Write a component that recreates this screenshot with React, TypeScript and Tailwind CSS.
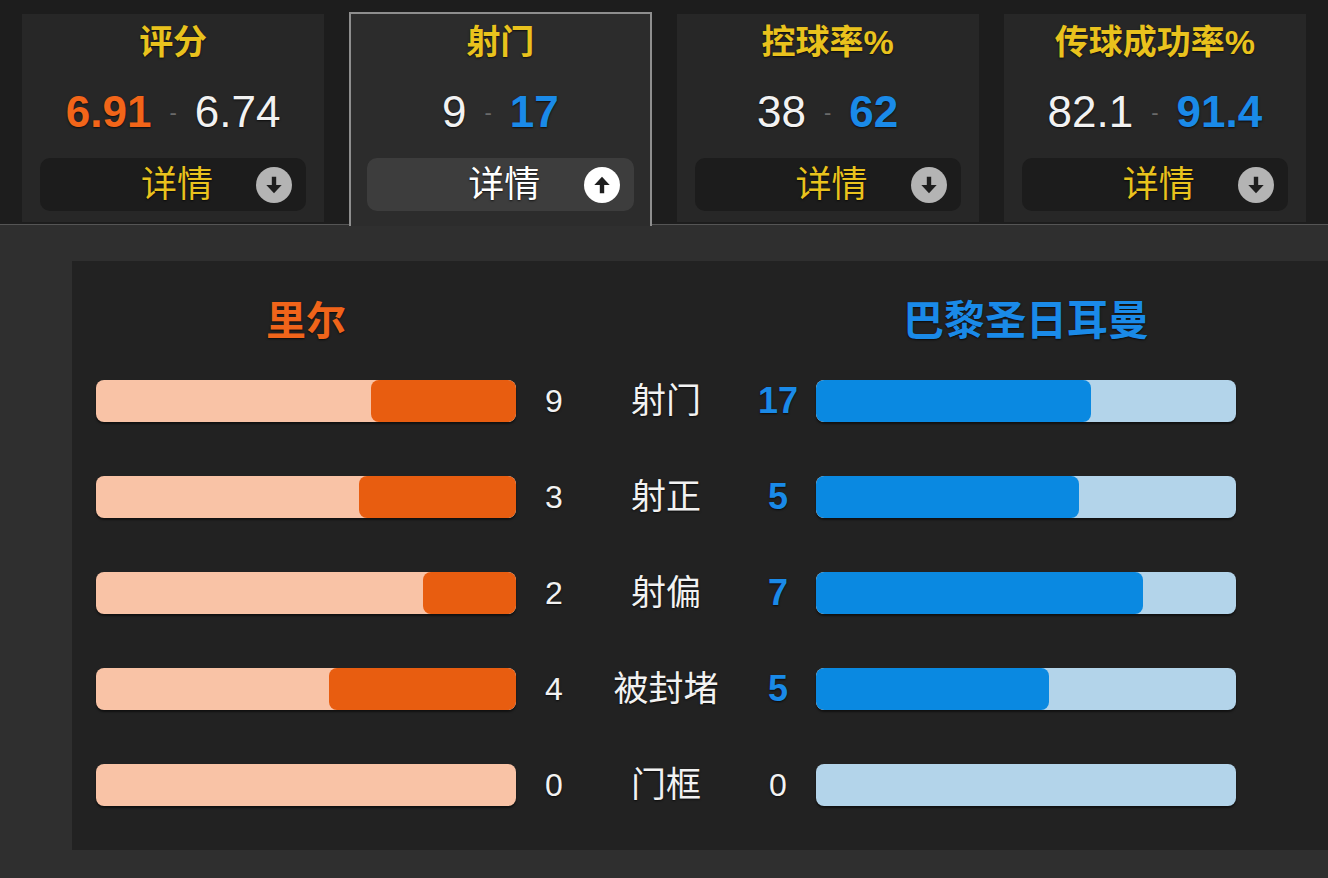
const font = "font-['Liberation_Sans','Noto_Sans_CJK_SC',sans-serif]";
const shadow = '[text-shadow:0_1px_2px_rgba(0,0,0,0.7)]';

const cards = [
  { title: '评分', home: '6.91', away: '6.74', lead: 'home' },
  { title: '射门', home: '9', away: '17', lead: 'away', active: true },
  { title: '控球率%', home: '38', away: '62', lead: 'away' },
  { title: '传球成功率%', home: '82.1', away: '91.4', lead: 'away' },
];

const rows = [
  { label: '射门', home: 9, away: 17 },
  { label: '射正', home: 3, away: 5 },
  { label: '射偏', home: 2, away: 7 },
  { label: '被封堵', home: 4, away: 5 },
  { label: '门框', home: 0, away: 0 },
];

function ArrowIcon({ up }: { up?: boolean }) {
  return (
    <span
      className={`flex h-[36px] w-[36px] items-center justify-center rounded-full ${
        up ? 'bg-white' : 'bg-[#b4b4b4]'
      }`}
    >
      <svg width="22" height="22" viewBox="0 0 20 20" className={up ? 'rotate-180' : ''}>
        <rect x="8" y="2.5" width="4" height="8.5" fill="#1e1e1e" />
        <path d="M3 10 L17 10 L10 17.5 Z" fill="#1e1e1e" />
      </svg>
    </span>
  );
}

function StatCard({ card }: { card: (typeof cards)[number] }) {
  const homeLead = card.lead === 'home';
  return (
    <div
      className={
        card.active
          ? 'relative z-10 mt-[12px] flex h-[214px] flex-1 flex-col items-center border-2 border-b-0 border-[#8e8e8e] bg-[#2c2c2c] px-[16px] pt-[8px]'
          : 'mt-[14px] flex h-[208px] flex-1 flex-col items-center bg-[#272727] px-[18px] pt-[8px]'
      }
    >
      <div className={`h-[40px] text-[34px] font-bold leading-[40px] text-[#e9c21d] ${shadow}`}>{card.title}</div>
      <div className="mt-[25px] flex h-[50px] items-center gap-[18px]">
        <span
          className={`text-[44px] leading-[50px] ${homeLead ? 'font-bold text-[#f26519]' : 'text-[#f2f2f2]'} ${shadow}`}
        >
          {card.home}
        </span>
        <span className="text-[22px] text-[#6a6a6a]">-</span>
        <span
          className={`text-[44px] leading-[50px] ${!homeLead ? 'font-bold text-[#1a8ae8]' : 'text-[#f2f2f2]'} ${shadow}`}
        >
          {card.away}
        </span>
      </div>
      <div
        className={`relative mt-[21px] flex h-[53px] w-full items-center justify-center rounded-[10px] ${
          card.active ? 'bg-[#3d3d3d]' : 'bg-[#1c1c1c]'
        }`}
      >
        <span
          className={`pl-[8px] text-[36px] leading-[53px] ${card.active ? 'text-white' : 'text-[#e9c21d]'} ${shadow}`}
        >
          详情
        </span>
        <span className="absolute right-[14px] top-[9px]">
          <ArrowIcon up={card.active} />
        </span>
      </div>
    </div>
  );
}

function Bar({ value, total, side }: { value: number; total: number; side: 'home' | 'away' }) {
  const pct = total > 0 ? (value / total) * 100 : 0;
  const home = side === 'home';
  return (
    <div
      className={`flex h-[42px] w-[420px] overflow-hidden rounded-[8px] shadow-[0_2px_2px_rgba(0,0,0,0.5)] ${
        home ? 'justify-end bg-[#f9c3a6]' : 'justify-start bg-[#b3d4ea]'
      }`}
    >
      {pct > 0 && (
        <div
          className={`h-full rounded-[8px] ${home ? 'bg-[#e85d10]' : 'bg-[#0a89e1]'}`}
          style={{ width: `${pct}%` }}
        />
      )}
    </div>
  );
}

export default function App() {
  return (
    <div className={`h-[878px] w-[1328px] overflow-hidden bg-[#2f2f2f] ${font}`}>
      <div className="flex h-[225px] items-start gap-[25px] border-b border-[#555555] bg-[#1d1d1d] px-[22px]">
        {cards.map((c) => (
          <StatCard key={c.title} card={c} />
        ))}
      </div>

      <div className="ml-[72px] mt-[36px] h-[589px] bg-[#222222] pl-[24px] pt-[36px]">
        <div className="flex h-[48px] items-center">
          <div className={`w-[420px] text-center text-[40px] font-bold leading-[48px] text-[#f0641a] ${shadow}`}>里尔</div>
          <div className="w-[300px]" />
          <div className={`w-[420px] text-center text-[41px] font-bold leading-[48px] text-[#1a8ae8] ${shadow}`}>
            巴黎圣日耳曼
          </div>
        </div>

        <div className="mt-[35px] flex flex-col gap-[54px]">
          {rows.map((r) => {
            const total = r.home + r.away;
            return (
              <div key={r.label} className="flex h-[42px] items-center">
                <Bar value={r.home} total={total} side="home" />
                <div className={`w-[76px] text-center text-[32px] text-[#f2f2f2] ${shadow}`}>{r.home}</div>
                <div className={`w-[148px] text-center text-[35px] text-[#f2f2f2] ${shadow}`}>{r.label}</div>
                <div
                  className={`w-[76px] text-center ${
                    r.away > 0 ? 'text-[36px] font-bold text-[#1a8ae8]' : 'text-[32px] text-[#f2f2f2]'
                  } ${shadow}`}
                >
                  {r.away}
                </div>
                <Bar value={r.away} total={total} side="away" />
              </div>
            );
          })}
        </div>
      </div>
    </div>
  );
}
